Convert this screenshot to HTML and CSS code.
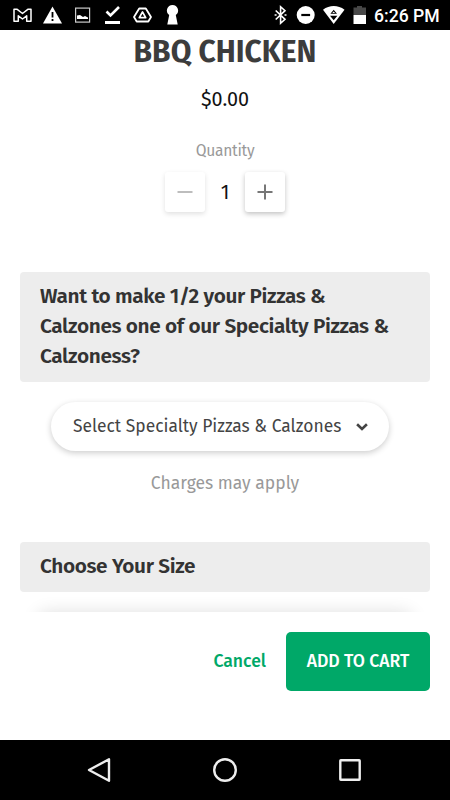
FILE: index.html
```html
<!DOCTYPE html>
<html lang="en">
<head>
<meta charset="utf-8">
<title>BBQ Chicken</title>
<link rel="stylesheet" href="styles.css">
</head>
<body>
<div class="screen">
  <header class="status">
    <svg class="status-icons" width="185" height="30" viewBox="0 0 185 30" fill="none" stroke="#fff">
      <path d="M14 9.300h3.200l5.300 4.200 5.300-4.200H31v12h-4.300v-5.500l-4.200 3.200-4.200-3.200v5.500H14z" stroke-width="1.500" stroke-linejoin="round"/>
      <path d="M52.500 6.500 62 23.500H43z" fill="#fff" stroke="none"/>
      <path d="M52.500 12v5.500M52.500 19v2" stroke="#000" stroke-width="1.800"/>
      <rect x="75.600" y="8.100" width="14" height="14" stroke="#ccc" stroke-width="1.200"/>
      <path d="M77 19v-3.500l3-.5 3 2 2-1 3 1.500V19z" fill="#fff" stroke="none"/>
      <path d="m106.500 11.500 4 4 8.500-8.500" stroke-width="2.600"/>
      <path d="M105 22.500h15" stroke-width="3"/>
      <path d="M139.200 8.500h6.600l5.200 8.500-2.700 4.500h-11.600L134 17z" stroke-width="1.800" stroke-linejoin="round"/>
      <path d="m142.500 12 3.200 5.700h-6.400z" stroke-width="1.700" stroke-linejoin="round"/>
      <path d="M172.500 5a5.600 5.600 0 0 0-3.300 10.100L167.300 24.500h10.400l-1.900-9.400A5.600 5.600 0 0 0 172.500 5z" fill="#fff" stroke="none"/>
    </svg>
    <div class="status-right">
      <svg width="104" height="30" viewBox="270 0 104 30" fill="none" stroke="#fff">
        <path d="m275.700 10.500 9.300 8.800-4.400 4V6.700l4.400 4-9.300 8.800" stroke-width="1.600"/>
        <path d="M274.600 15h2M284.500 15h2" stroke-width="1.600"/>
        <circle cx="305.700" cy="15" r="9" fill="#fff" stroke="none"/>
        <path d="M301.300 15h8.800" stroke="#000" stroke-width="2.200"/>
        <path d="M323 9.800c6.500-5 15-5 21.500 0L333.700 24z" fill="#fff" stroke="none"/>
        <path d="m333.700 9.800 3.300 4h-6.600zM330 15.800h7.400l-3.700 4.400z" fill="#000" stroke="none"/>
        <path d="m333.700 11.500 1.300 1.500h-2.600z" fill="#fff" stroke="none"/>
        <path d="M353.500 7.500h3.500V6h5v1.500h4V15h-12.500z" fill="#484848" stroke="none"/>
        <path d="M353.500 15H366v9h-12.500z" fill="#fff" stroke="none"/>
      </svg>
      <span class="time">6:26 PM</span>
    </div>
  </header>
  <main class="content">
    <h1 class="title">BBQ CHICKEN</h1>
    <div class="price">$0.00</div>
    <div class="quantity-label">Quantity</div>
    <div class="stepper">
      <button class="step step-off" aria-label="Decrease"><svg width="16" height="16" viewBox="0 0 16 16"><path d="M.5 8h15" stroke="#bdbdbd" stroke-width="2"/></svg></button>
      <span class="count">1</span>
      <button class="step" aria-label="Increase"><svg width="16" height="16" viewBox="0 0 16 16"><path d="M.5 8h15M8 .5v15" stroke="#777" stroke-width="2"/></svg></button>
    </div>
    <h2 class="section half">Want to make 1/2 your Pizzas &amp;<br>Calzones one of our Specialty Pizzas &amp;<br>Calzoness?</h2>
    <button class="select"><span>Select Specialty Pizzas &amp; Calzones</span><svg width="12" height="8" viewBox="0 0 12 8" fill="none"><path d="m1.100 1.300 4.900 4.600 4.900-4.600" stroke="#444" stroke-width="2.600"/></svg></button>
    <p class="note">Charges may apply</p>
    <h2 class="section size">Choose Your Size</h2>
    <div class="options"></div>
  </main>
  <footer class="actions">
    <button class="cancel">Cancel</button>
    <button class="add">ADD TO CART</button>
  </footer>
  <nav class="navbar">
    <svg width="26" height="26" viewBox="0 0 26 26"><path d="M23 2.300v21.400L3 13z"/></svg>
    <svg width="26" height="26" viewBox="0 0 26 26"><circle cx="13" cy="13" r="10.800"/></svg>
    <svg width="26" height="26" viewBox="0 0 26 26"><rect x="3.300" y="3.300" width="19.400" height="19.400" rx=".5"/></svg>
  </nav>
</div>
</body>
</html>
```

FILE: styles.css
```css
* { box-sizing: border-box; }
body { margin: 0; }
button { border: 0; padding: 0; background: #fff; font: inherit; }
.screen {
  width: 450px; height: 800px; display: flex; flex-direction: column;
  overflow: hidden; background: #fff; color: #333;
  font-family: "Fira Sans", "Open Sans", "Noto Sans", sans-serif;
  white-space: nowrap;
}
.status {
  height: 30px; flex: none; background: #000; color: #fff;
  display: flex; justify-content: space-between;
}
.status svg { display: block; }
.status-right { display: flex; }
.time { width: 76px; font: 500 17.600px/32px Roboto, sans-serif; }
.content {
  height: 582px; flex: none; padding: 0 20px; overflow: hidden;
  display: flex; flex-direction: column; align-items: center;
}
.content > * { flex: none; }
.title { margin: 2px 0 0; font-size: 30px; line-height: 40px; font-weight: 700; color: #3c3c3c; }
.price { margin-top: 14px; font-size: 19.800px; line-height: 26px; font-weight: 400; color: #111; }
.quantity-label { margin-top: 29px; font-size: 15.600px; letter-spacing: -.25px; line-height: 20px; font-weight: 400; color: #999; }
.stepper { margin-top: 11px; display: flex; align-items: center; }
.step {
  width: 40px; height: 40px; border-radius: 3px; display: grid; place-items: center;
  box-shadow: 0 2px 5px rgba(0,0,0,.24);
}
.step-off { box-shadow: 0 2px 5px rgba(0,0,0,.12); }
.count { width: 40px; text-align: center; font-size: 20px; line-height: 40px; color: #111; }
.section {
  width: 410px; margin: 0; padding: 10px 20px; border-radius: 4px; background: #ededed;
  font-size: 20.800px; letter-spacing: -.37px; line-height: 30px; font-weight: 600; color: #333;
}
.half { margin-top: 60px; height: 110px; }
.select {
  width: 338px; height: 49px; margin: 20px 10px 0 0; padding: 0 21px 0 22px; border-radius: 25px;
  display: flex; align-items: center; justify-content: space-between;
  box-shadow: 0 2px 6px rgba(0,0,0,.2); font-size: 17.450px; color: #444;
}
.select svg { margin-top: 1px; }
.note { margin: 20px 0 0; font-size: 17.500px; line-height: 26px; color: #999; }
.size { margin-top: 45px; height: 50px; }
.options { width: 374px; height: 60px; margin-top: 21px; border-radius: 8px; box-shadow: 0 0 18px rgba(0,0,0,.14); }
.actions {
  position: relative; height: 128px; flex: none; padding: 20px 20px 0; background: #fff;
  display: flex; justify-content: flex-end; align-items: flex-start; gap: 20px;
}
.cancel { height: 58px; font-size: 17.600px; font-weight: 500; color: #00a868; }
.add { width: 144px; height: 59px; border-radius: 5px; background: #00a868; color: #fff; font-size: 17.600px; font-weight: 500; }
.navbar {
  height: 60px; flex: none; padding: 0 87px 0 86px; background: #000;
  display: flex; align-items: center; justify-content: space-between;
}
.navbar path, .navbar circle, .navbar rect { fill: none; stroke: #eee; stroke-width: 2.400; stroke-linejoin: round; }
```
